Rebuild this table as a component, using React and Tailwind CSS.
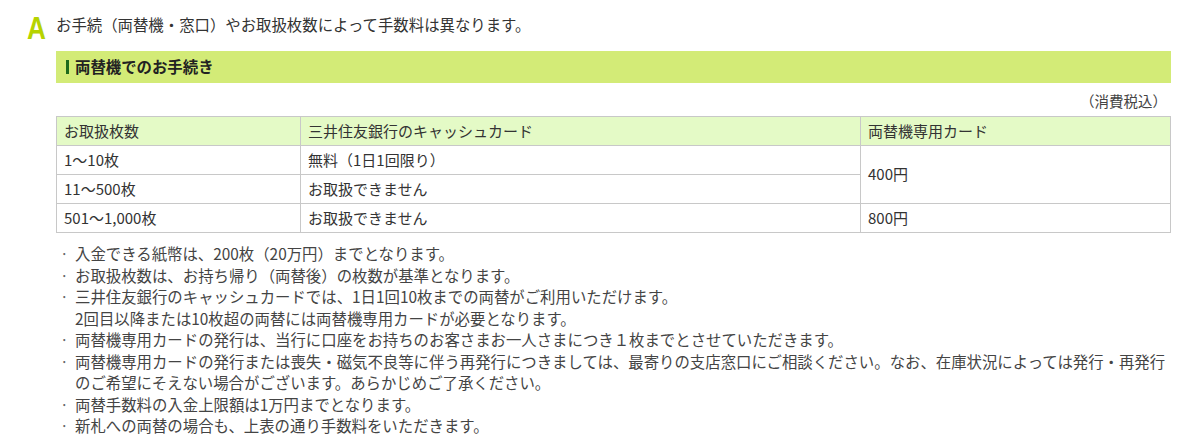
const ROWS = [
  { count: '1〜10枚', cash: '無料（1日1回限り）' },
  { count: '11〜500枚', cash: 'お取扱できません' },
  { count: '501〜1,000枚', cash: 'お取扱できません' },
];

const NOTES = [
  ['入金できる紙幣は、200枚（20万円）までとなります。'],
  ['お取扱枚数は、お持ち帰り（両替後）の枚数が基準となります。'],
  [
    '三井住友銀行のキャッシュカードでは、1日1回10枚までの両替がご利用いただけます。',
    '2回目以降または10枚超の両替には両替機専用カードが必要となります。',
  ],
  ['両替機専用カードの発行は、当行に口座をお持ちのお客さまお一人さまにつき１枚までとさせていただきます。'],
  [
    '両替機専用カードの発行または喪失・磁気不良等に伴う再発行につきましては、最寄りの支店窓口にご相談ください。なお、在庫状況によっては発行・再発行',
    'のご希望にそえない場合がございます。あらかじめご了承ください。',
  ],
  ['両替手数料の入金上限額は1万円までとなります。'],
  ['新札への両替の場合も、上表の通り手数料をいただきます。'],
];

export default function App() {
  return (
    <div className="w-[1200px] h-[444px] overflow-hidden bg-white text-[#333] font-['Noto_Sans_CJK_JP','Noto_Sans',sans-serif]">
      <div className="flex items-start pt-[10px] pl-[27px]">
        <span className="w-[29px] font-['Liberation_Sans',sans-serif] font-bold text-[32px] leading-[36px] text-[#b6d300] scale-x-[0.82] origin-left">
          A
        </span>
        <p className="mt-[1px] text-[15.4px] leading-[26px]">お手続（両替機・窓口）やお取扱枚数によって手数料は異なります。</p>
      </div>

      <div className="ml-[56px] w-[1115px]">
        <div className="mt-[5px] h-[32px] bg-[#d3eb77] flex items-center pl-[10px]">
          <span className="w-[3px] h-[14px] bg-[#1d6a1d] mr-[6px]" />
          <span className="font-bold text-[15.4px] text-[#222]">両替機でのお手続き</span>
        </div>

        <p className="mt-[8px] pr-[4px] text-right text-[14.5px] leading-[20px] text-[#444]">（消費税込）</p>

        <table className="mt-[5px] w-full border-collapse text-[15px] text-[#333]">
          <thead>
            <tr className="bg-[#e4fac6] h-[29px]">
              <th className="w-[244px] border border-[#c8c8c8] pl-[7px] text-left font-normal">お取扱枚数</th>
              <th className="w-[560px] border border-[#c8c8c8] pl-[7px] text-left font-normal">三井住友銀行のキャッシュカード</th>
              <th className="border border-[#c8c8c8] pl-[7px] text-left font-normal">両替機専用カード</th>
            </tr>
          </thead>
          <tbody>
            {ROWS.map((row, i) => (
              <tr key={row.count} className="h-[29px]">
                <td className="border border-[#c8c8c8] pl-[7px]">{row.count}</td>
                <td className="border border-[#c8c8c8] pl-[7px]">{row.cash}</td>
                {i === 0 && (
                  <td rowSpan={2} className="border border-[#c8c8c8] pl-[7px]">400円</td>
                )}
                {i === 2 && <td className="border border-[#c8c8c8] pl-[7px]">800円</td>}
              </tr>
            ))}
          </tbody>
        </table>

        <ul className="mt-[10px] text-[15.4px] leading-[21.5px] text-[#444]">
          {NOTES.map((lines) => (
            <li key={lines[0]} className="flex">
              <span className="w-[19px] pl-[4px] shrink-0 text-[#666]">·</span>
              <span className="whitespace-nowrap">
                {lines.map((line, j) => (
                  <span key={j} className="block">
                    {line}
                  </span>
                ))}
              </span>
            </li>
          ))}
        </ul>
      </div>
    </div>
  );
}
